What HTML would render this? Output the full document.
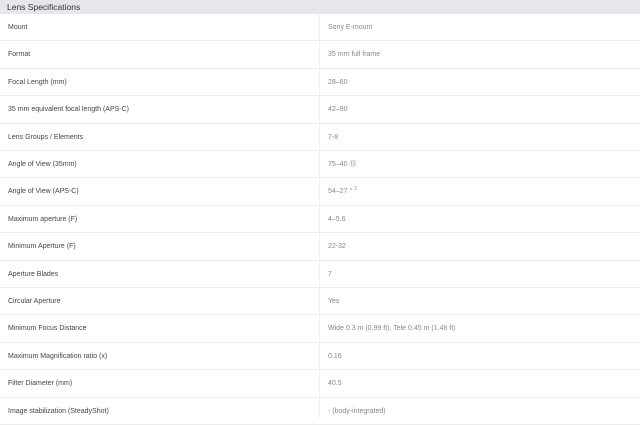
<!DOCTYPE html>
<html><head><style>
body{margin:0;width:640px;height:418px;overflow:hidden;background:#fff;font-family:"Liberation Sans",sans-serif;position:relative}
.h{position:absolute;left:0;top:0;width:640px;height:14px;background:#e5e7ea;font-size:8.5px;color:#333;line-height:14px;padding-left:7px;box-sizing:border-box}
.v{position:absolute;left:319px;top:14px;width:1px;height:404px;background:#f0f0f0}
.r{position:absolute;left:0;width:640px;height:27.4px;border-bottom:1px solid #ececec;box-sizing:border-box;font-size:7px;line-height:27px}
.r .a{position:absolute;left:8px;color:#444}
.r .b{position:absolute;left:328px;color:#888}
sup{font-size:5px;line-height:0;vertical-align:3px}
</style></head><body>
<div class="h">Lens Specifications</div>
<div class="r" style="top:14px"><span class="a">Mount</span><span class="b">Sony E-mount</span></div>
<div class="r" style="top:41.4px"><span class="a">Format</span><span class="b">35 mm full frame</span></div>
<div class="r" style="top:68.8px"><span class="a">Focal Length (mm)</span><span class="b">28–60</span></div>
<div class="r" style="top:96.2px"><span class="a">35 mm equivalent focal length (APS-C)</span><span class="b">42–90</span></div>
<div class="r" style="top:123.6px"><span class="a">Lens Groups / Elements</span><span class="b">7-8</span></div>
<div class="r" style="top:151px"><span class="a">Angle of View (35mm)</span><span class="b">75–40 ⑮</span></div>
<div class="r" style="top:178.4px"><span class="a">Angle of View (APS-C)</span><span class="b">54–27 ° <sup>2</sup></span></div>
<div class="r" style="top:205.8px"><span class="a">Maximum aperture (F)</span><span class="b">4–5.6</span></div>
<div class="r" style="top:233.2px"><span class="a">Minimum Aperture (F)</span><span class="b">22-32</span></div>
<div class="r" style="top:260.6px"><span class="a">Aperture Blades</span><span class="b">7</span></div>
<div class="r" style="top:288px"><span class="a">Circular Aperture</span><span class="b">Yes</span></div>
<div class="r" style="top:315.4px"><span class="a">Minimum Focus Distance</span><span class="b">Wide 0.3 m (0.99 ft), Tele 0.45 m (1.48 ft)</span></div>
<div class="r" style="top:342.8px"><span class="a">Maximum Magnification ratio (x)</span><span class="b">0.16</span></div>
<div class="r" style="top:370.2px"><span class="a">Filter Diameter (mm)</span><span class="b">40.5</span></div>
<div class="r" style="top:397.6px"><span class="a">Image stabilization (SteadyShot)</span><span class="b">- (body-integrated)</span></div>
<div class="v"></div>
</body></html>
